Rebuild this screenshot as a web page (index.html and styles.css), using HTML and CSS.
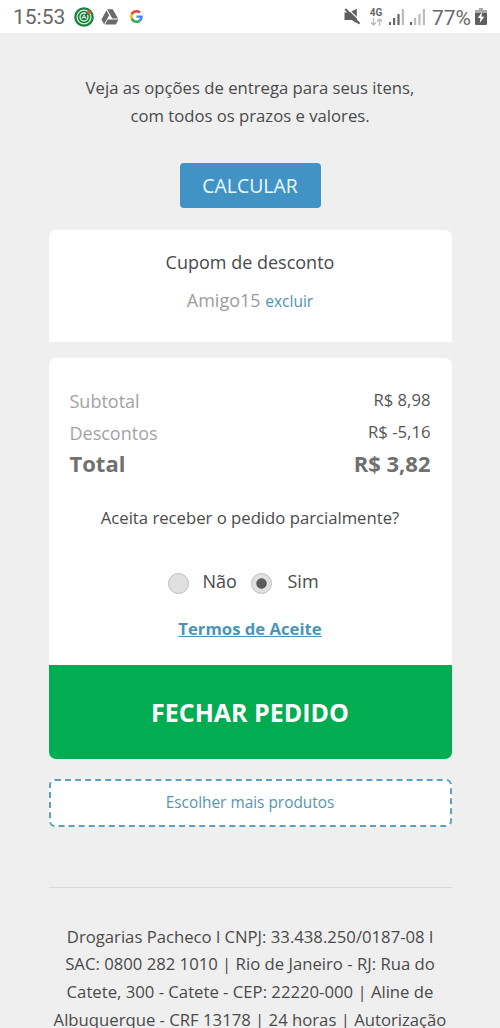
FILE: index.html
```html
<!DOCTYPE html>
<html lang="pt-BR">
<head>
<meta charset="utf-8">
<meta name="viewport" content="width=device-width">
<title>Carrinho</title>
<link rel="stylesheet" href="styles.css">
</head>
<body>
<header class="status">
  <span class="clock">15:53</span>
  <svg class="ic-target" width="20" height="20" viewBox="0 0 20 20"><circle cx="10" cy="10" r="9.8" fill="#16823d"/><circle cx="10" cy="10" r="6.900" fill="none" stroke="#d9efd9" stroke-width="1.3"/><circle cx="10" cy="10" r="4" fill="#16823d" stroke="#e4f4e4" stroke-width="1.3"/><path d="M8 11.8 10 7.8l2 4M8.8 10.5h3.2" fill="none" stroke="#d9efd9" stroke-width="1"/><path d="M11.5 8.5 15.5 4.5" stroke="#197438" stroke-width="1.8"/><path d="M12.800 5.400 14.800 2.500l3 2.700-3.400 2.300z" fill="#d9533d"/></svg>
  <svg class="ic-drive" width="18" height="16" viewBox="0 0 18 16"><g fill="#6a6a6a"><path d="M6.1.3h5.6l5.3 9.2h-5.7z"/><path d="M5.4 1.5 8.2 6.3 3.1 15.3.4 10.5z"/><path d="M6.7 10.6h10.9l-2.8 4.8H4z"/></g></svg>
  <svg class="ic-g" width="13" height="13" viewBox="0 0 48 48"><path fill="#ea4335" d="M24 9.5c3.5 0 6.700 1.200 9.200 3.600l6.900-6.900C35.900 2.400 30.500 0 24 0 14.600 0 6.500 5.400 2.600 13.200l8 6.200C12.400 13.700 17.700 9.500 24 9.500z"/><path fill="#4285f4" d="M47 24.600c0-1.600-.2-3.100-.4-4.600H24v9h12.900c-.6 3-2.200 5.500-4.700 7.200l7.700 6C44.400 38 47 31.800 47 24.600z"/><path fill="#fbbc05" d="M10.500 28.600c-.9-3-.9-6.200 0-9.200l-8-6.200c-3.300 6.800-3.300 14.800 0 21.600z"/><path fill="#34a853" d="M24 48c6.500 0 11.900-2.100 15.900-5.800l-7.700-6c-2.200 1.400-4.900 2.300-8.200 2.300-6.300 0-11.600-4.200-13.500-9.900l-8 6.200C6.500 42.600 14.600 48 24 48z"/></svg>
  <svg class="ic-mute" width="17" height="17" viewBox="0 0 17 17"><path d="M.5 4.500h5l7.300-3.700v14.500L7.800 12H.5z" fill="#5e5e5e"/><path d="M3.200.3 16.800 13.300" stroke="#fff" stroke-width="1.200"/><path d="M1.300 1 15.500 15.800" stroke="#5e5e5e" stroke-width="2"/></svg>
  <span class="net"><span class="net-label">4G</span><svg width="13" height="8" viewBox="0 0 13 8" fill="none" stroke="#bbb" stroke-width="1.500"><path d="M3.500 0v7M1 4.500l2.500 2.500L6 4.500M9.500 8V1M7 3.500 9.500 1 12 3.500"/></svg></span>
  <svg class="ic-signal" width="15" height="16" viewBox="0 0 15 16"><path fill="#666" d="M0 13h2v3H0zM4 9h2.200v7H4zM8.400 5h2.200v11H8.400z"/><path fill="#bdbdbd" d="M12.800 0H15v16h-2.200z"/></svg>
  <svg class="ic-signal2" width="15" height="16" viewBox="0 0 15 16"><path fill="#666" d="M0 13h2v3H0z"/><path fill="#bdbdbd" d="M4 9h2.200v7H4zM8.400 5h2.200v11H8.400zM12.800 0H15v16h-2.200z"/></svg>
  <span class="pct">77%</span>
  <svg class="ic-batt" width="12" height="17" viewBox="0 0 12 17"><path fill="#aaa" d="M4 0h4v2h4v3H0V2h4z"/><path fill="#5e5e5e" d="M0 5h12v10.500q0 1.500-1.500 1.500h-9Q0 17 0 15.500z"/><path fill="#fff" d="M7 4 2.800 10h2.700L4.700 15l4.600-6.300H6.500z"/></svg>
</header>
<main class="page">
  <p class="intro">Veja as opções de entrega para seus itens,<br>com todos os prazos e valores.</p>
  <button class="calc">CALCULAR</button>
  <section class="card coupon">
    <h2 class="coupon-title">Cupom de desconto</h2>
    <p class="coupon-code">Amigo15 <a class="remove">excluir</a></p>
  </section>
  <section class="card summary">
    <div class="row"><span class="label">Subtotal</span><span class="value">R$ 8,98</span></div>
    <div class="row"><span class="label">Descontos</span><span class="value">R$ -5,16</span></div>
    <div class="row total"><span>Total</span><span>R$ 3,82</span></div>
    <p class="question">Aceita receber o pedido parcialmente?</p>
    <div class="options">
      <span class="radio"></span><span class="opt no">Não</span>
      <span class="radio checked"></span><span class="opt yes">Sim</span>
    </div>
    <a class="terms">Termos de Aceite</a>
    <button class="checkout">FECHAR PEDIDO</button>
  </section>
  <a class="more">Escolher mais produtos</a>
  <footer class="legal">Drogarias Pacheco l CNPJ: 33.438.250/0187-08 l<br>SAC: 0800 282 1010 | Rio de Janeiro - RJ: Rua do<br>Catete, 300 - Catete - CEP: 22220-000 | Aline de<br>Albuquerque - CRF 13178 | 24 horas | Autorização</footer>
</main>
</body>
</html>
```
FILE: styles.css
```css
* { box-sizing: border-box; }
html { overflow: hidden; }
body { margin: 0; height: 1028px; overflow: hidden; background: #efefef; color: #4a4a4a; font-family: "Open Sans", sans-serif; }
p, h2 { margin: 0; font-weight: 400; }
button { border: 0; padding: 0; font-family: inherit; }
svg { display: block; flex: none; }
.status { display: flex; align-items: center; height: 33px; padding-left: 13px; background: #fff; color: #686868; font-family: Roboto, sans-serif; }
.clock { width: 52px; margin-right: 9px; padding-top: 2px; font-size: 21px; line-height: 33px; white-space: nowrap; }
.ic-drive { margin-left: 7px; }
.ic-g { margin-left: 11px; }
.ic-mute { margin-left: 201px; }
.net { display: flex; flex-direction: column; align-items: center; width: 14px; margin-left: 8px; }
.net-label { font-size: 10px; font-weight: 700; line-height: 10px; }
.ic-signal { margin-left: 6px; }
.ic-signal2 { margin-left: 6px; }
.pct { width: 38px; margin-left: 7px; padding-top: 2px; font-size: 21px; white-space: nowrap; }
.ic-batt { margin-left: 5px; }
.page { display: flex; flex-direction: column; padding: 41px 48.500px 0; }
.intro { font-size: 16.7px; line-height: 27.800px; text-align: center; white-space: nowrap; }
.calc { align-self: center; width: 141px; height: 45px; margin-top: 33px; border-radius: 4px; background: #4193c6; color: #e9faff; font-size: 19.400px; line-height: 45px; }
.card { background: #fff; text-align: center; }
.coupon { height: 112px; margin-top: 22px; padding-top: 18px; border-radius: 7px 7px 0 0; }
.coupon-title { font-size: 18px; line-height: 28px; }
.coupon-code { margin-top: 10px; color: #9c9c9c; font-size: 18px; line-height: 28px; }
.remove { color: #4a95b5; font-size: 15.500px; }
.summary { display: flex; flex-direction: column; height: 401px; margin-top: 16px; padding-top: 26px; border-radius: 7px; overflow: hidden; }
.row { display: flex; justify-content: space-between; height: 32px; padding: 0 21px; line-height: 32px; }
.label { color: #a2a2a2; font-size: 18px; line-height: 34px; }
.value { color: #555; font-size: 16.700px; }
.total { color: #707070; font-size: 22px; font-weight: 700; line-height: 31px; }
.question { margin-top: 24px; font-size: 16.700px; line-height: 28px; }
.options { display: flex; align-items: center; height: 28px; margin-top: 35px; padding-left: 119px; font-size: 18px; line-height: 28px; }
.radio { width: 21px; height: 21px; margin-top: 5px; border: 1px solid #bcbcbc; border-radius: 50%; background: #e0e0e0; }
.checked { background: radial-gradient(circle, #5b5b5b 0 4.800px, #e0e0e0 5.600px); }
.no { width: 34px; margin: 0 14px; }
.yes { margin-left: 16px; }
.terms { margin-top: 20px; color: #4a95b5; font-size: 16.700px; font-weight: 700; line-height: 28px; text-decoration: underline; }
.checkout { height: 94px; margin-top: auto; background: #02ac50; color: #fff; font-size: 25px; font-weight: 700; line-height: 94px; }
.more { height: 48px; margin-top: 20px; border: 2px dashed #5f9fc0; border-radius: 6px; background: #fff; color: #5796b0; font-size: 15.400px; line-height: 44px; text-align: center; }
.legal { margin-top: 60px; padding-top: 35px; border-top: 1px solid #d9d9d9; font-size: 16.700px; line-height: 27.800px; text-align: center; white-space: nowrap; }
```
